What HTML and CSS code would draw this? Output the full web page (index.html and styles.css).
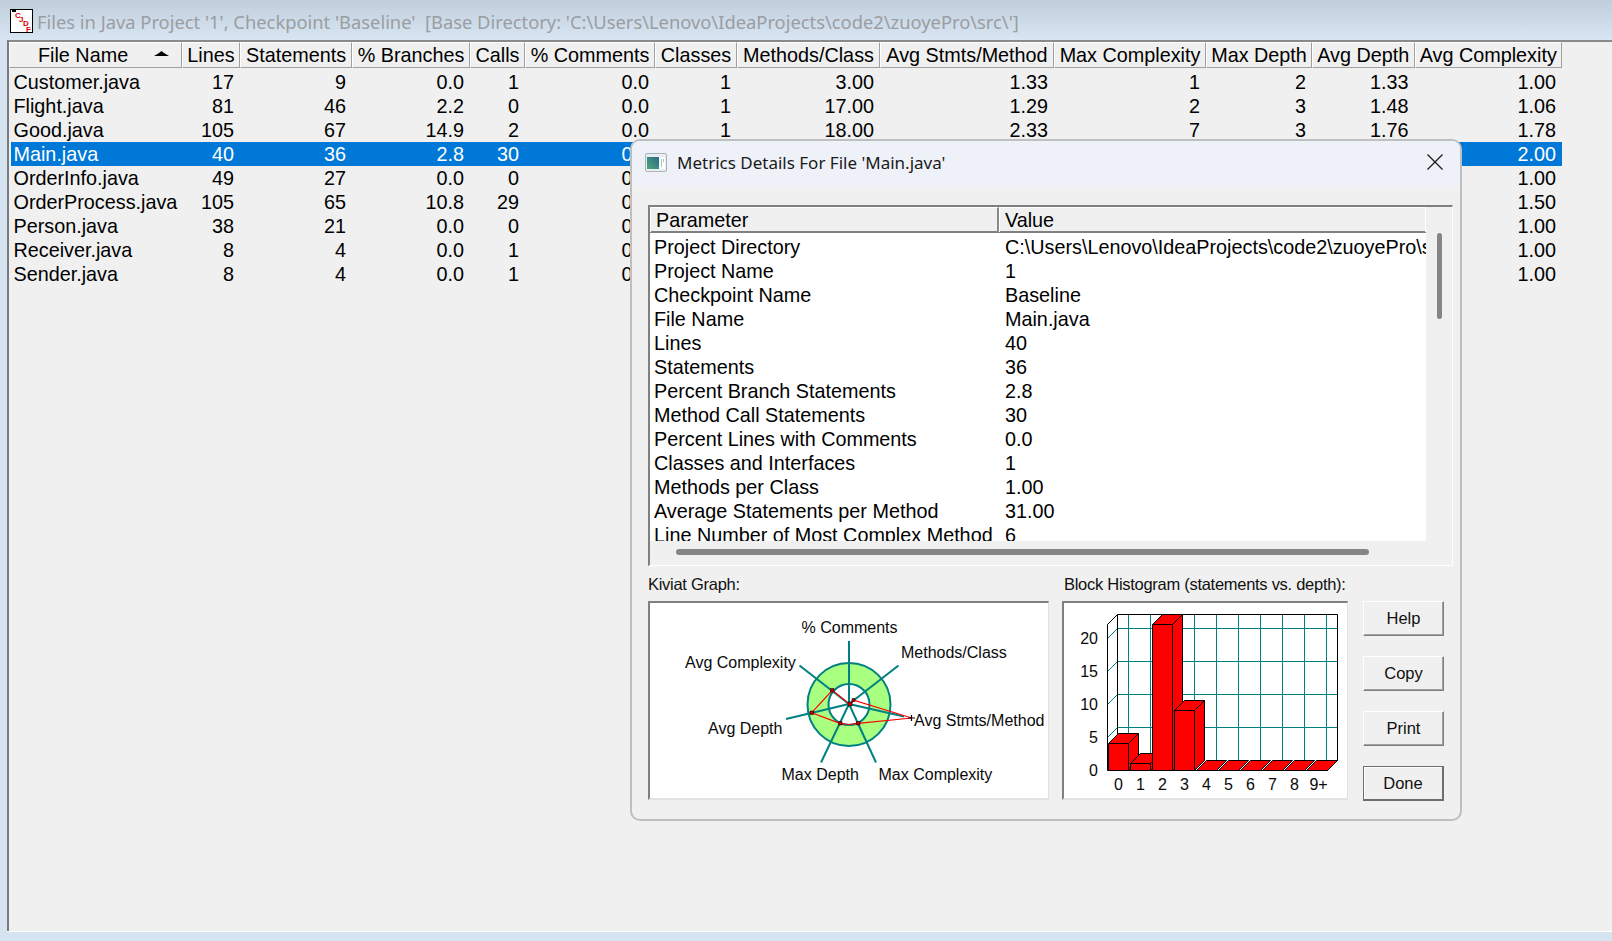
FILE: index.html
```html
<!DOCTYPE html>
<html lang="en">
<head>
<meta charset="utf-8">
<title>Files in Java Project</title>
<link rel="stylesheet" href="styles.css">
</head>
<body>
<div class="app">
  <header class="titlebar">
    <svg class="app-icon" viewBox="0 0 23 24">
      <rect x="0.5" y="0.5" width="22" height="23" fill="#fff" stroke="#000"/>
      <rect x="2" y="0" width="4" height="3" fill="#000"/>
      <text x="5" y="9" class="ico-t">C</text>
      <text x="9" y="13" class="ico-t">J</text>
      <text x="13" y="17" class="ico-t">D</text>
      <text x="16" y="23" class="ico-t">F</text>
    </svg>
    <span class="title-text">Files in Java Project '1', Checkpoint 'Baseline' &nbsp;[Base Directory: 'C:\Users\Lenovo\IdeaProjects\code2\zuoyePro\src\']</span>
  </header>

  <main class="list">
    <div class="list-head">
      <div class="hcell hcell-file"><span>File Name</span>
        <svg class="sort" viewBox="0 0 15 5"><path d="M0 5 L5 2 L7.5 0 L10 2 L15 5 Z" fill="#000"/></svg>
      </div>
      <div class="hcell">Lines</div>
      <div class="hcell">Statements</div>
      <div class="hcell">% Branches</div>
      <div class="hcell">Calls</div>
      <div class="hcell">% Comments</div>
      <div class="hcell">Classes</div>
      <div class="hcell">Methods/Class</div>
      <div class="hcell">Avg Stmts/Method</div>
      <div class="hcell">Max Complexity</div>
      <div class="hcell">Max Depth</div>
      <div class="hcell">Avg Depth</div>
      <div class="hcell">Avg Complexity</div>
    </div>
    <div class="list-body">
      <div class="row"><span class="name">Customer.java</span><span>17</span><span>9</span><span>0.0</span><span>1</span><span>0.0</span><span>1</span><span>3.00</span><span>1.33</span><span>1</span><span>2</span><span>1.33</span><span>1.00</span></div>
      <div class="row"><span class="name">Flight.java</span><span>81</span><span>46</span><span>2.2</span><span>0</span><span>0.0</span><span>1</span><span>17.00</span><span>1.29</span><span>2</span><span>3</span><span>1.48</span><span>1.06</span></div>
      <div class="row"><span class="name">Good.java</span><span>105</span><span>67</span><span>14.9</span><span>2</span><span>0.0</span><span>1</span><span>18.00</span><span>2.33</span><span>7</span><span>3</span><span>1.76</span><span>1.78</span></div>
      <div class="row row-selected"><span class="name">Main.java</span><span>40</span><span>36</span><span>2.8</span><span>30</span><span>0.0</span><span>1</span><span>1.00</span><span>31.00</span><span>2</span><span>2</span><span>1.50</span><span>2.00</span></div>
      <div class="row"><span class="name">OrderInfo.java</span><span>49</span><span>27</span><span>0.0</span><span>0</span><span>0.0</span><span>1</span><span>12.00</span><span>1.25</span><span>1</span><span>2</span><span>1.20</span><span>1.00</span></div>
      <div class="row"><span class="name">OrderProcess.java</span><span>105</span><span>65</span><span>10.8</span><span>29</span><span>0.0</span><span>1</span><span>6.00</span><span>9.50</span><span>4</span><span>4</span><span>2.10</span><span>1.50</span></div>
      <div class="row"><span class="name">Person.java</span><span>38</span><span>21</span><span>0.0</span><span>0</span><span>0.0</span><span>1</span><span>10.00</span><span>1.10</span><span>1</span><span>2</span><span>1.24</span><span>1.00</span></div>
      <div class="row"><span class="name">Receiver.java</span><span>8</span><span>4</span><span>0.0</span><span>1</span><span>0.0</span><span>1</span><span>1.00</span><span>2.00</span><span>1</span><span>2</span><span>1.00</span><span>1.00</span></div>
      <div class="row"><span class="name">Sender.java</span><span>8</span><span>4</span><span>0.0</span><span>1</span><span>0.0</span><span>1</span><span>1.00</span><span>2.00</span><span>1</span><span>2</span><span>1.00</span><span>1.00</span></div>
    </div>
  </main>
  <div class="bottom-strip"></div>

  <section class="dialog">
    <div class="dlg-title">
      <svg class="dlg-icon" viewBox="0 0 22 19">
        <defs>
          <linearGradient id="dg" x1="0" y1="1" x2="1" y2="0">
            <stop offset="0" stop-color="#4fa878"/>
            <stop offset="1" stop-color="#2c6a8a"/>
          </linearGradient>
        </defs>
        <rect x="0.5" y="0.5" width="21" height="18" rx="1.5" fill="#e8edf0" stroke="#a9b2b8"/>
        <rect x="2" y="4" width="12" height="12" fill="url(#dg)"/>
        <rect x="14" y="4" width="6" height="12" fill="#fff"/>
        <rect x="16" y="6" width="1" height="8" fill="#a5c5b5"/>
        <rect x="18" y="6" width="1" height="3" fill="#a5c5b5"/>
      </svg>
      <span class="dlg-title-text">Metrics Details For File 'Main.java'</span>
      <svg class="dlg-close" viewBox="0 0 16 16"><path d="M0.5 0.5 L15.5 15.5 M15.5 0.5 L0.5 15.5" stroke="#1a1a1a" stroke-width="1.3" fill="none"/></svg>
    </div>

    <div class="dlg-body">
      <div class="panel">
        <div class="panel-main">
          <div class="d-head">
            <div class="d-hcell">Parameter</div>
            <div class="d-hcell d-hcell-last">Value</div>
          </div>
          <div class="d-rows">
            <div class="d-row"><span>Project Directory</span><span class="d-val">C:\Users\Lenovo\IdeaProjects\code2\zuoyePro\src\</span></div>
            <div class="d-row"><span>Project Name</span><span class="d-val">1</span></div>
            <div class="d-row"><span>Checkpoint Name</span><span class="d-val">Baseline</span></div>
            <div class="d-row"><span>File Name</span><span class="d-val">Main.java</span></div>
            <div class="d-row"><span>Lines</span><span class="d-val">40</span></div>
            <div class="d-row"><span>Statements</span><span class="d-val">36</span></div>
            <div class="d-row"><span>Percent Branch Statements</span><span class="d-val">2.8</span></div>
            <div class="d-row"><span>Method Call Statements</span><span class="d-val">30</span></div>
            <div class="d-row"><span>Percent Lines with Comments</span><span class="d-val">0.0</span></div>
            <div class="d-row"><span>Classes and Interfaces</span><span class="d-val">1</span></div>
            <div class="d-row"><span>Methods per Class</span><span class="d-val">1.00</span></div>
            <div class="d-row"><span>Average Statements per Method</span><span class="d-val">31.00</span></div>
            <div class="d-row"><span>Line Number of Most Complex Method</span><span class="d-val">6</span></div>
          </div>
          <div class="h-scroll"><div class="h-thumb"></div></div>
        </div>
        <div class="v-scroll"><div class="v-thumb"></div></div>
      </div>

      <div class="lower">
        <div class="graph-col">
          <div class="g-label">Kiviat Graph:</div>
          <div class="g-box">
            <svg class="g-svg" viewBox="650 603 398 195">
              <circle cx="849" cy="704.5" r="41.5" fill="#a8ff80" stroke="#008080" stroke-width="2"/>
              <circle cx="849" cy="704.5" r="20.5" fill="#fff" stroke="#008080" stroke-width="2"/>
              <g stroke="#008080" stroke-width="2" fill="none">
                <path d="M849 704 L849 641"/>
                <path d="M849 704 L898.5 665.5"/>
                <path d="M849 704 L904 716.5"/>
                <path d="M849 704 L876 762.5"/>
                <path d="M849 704 L821 762.5"/>
                <path d="M849 704 L786 719"/>
                <path d="M849 704 L799.5 665.5"/>
              </g>
              <polygon points="850,704.5 853.7,700.3 911.7,718 858.3,723.3 849,724.5 840,723.3 811.7,712.7 832.3,690.3" fill="none" stroke="#f00" stroke-width="1.2"/>
              <path d="M848 702 h4 v4 h-4 z M852 698.5 h3 v3 h-3 z M810 711 h3.5 v3.5 h-3.5 z M830.5 688.5 h3.5 v3.5 h-3.5 z M838.5 721.5 h3.5 v3.5 h-3.5 z M856.5 721.5 h3.5 v3.5 h-3.5 z" fill="#c00000" stroke="#000" stroke-width="0.5"/>
              <path d="M908 718 h7 M911.5 715 v6" stroke="#000" stroke-width="1.2"/>
              <text class="g-t" x="801.5" y="632.5">% Comments</text>
              <text class="g-t" x="901" y="657.5">Methods/Class</text>
              <text class="g-t" x="685" y="667.5">Avg Complexity</text>
              <text class="g-t" x="914" y="725.5">Avg Stmts/Method</text>
              <text class="g-t" x="708" y="734">Avg Depth</text>
              <text class="g-t" x="781.5" y="780">Max Depth</text>
              <text class="g-t" x="878.5" y="780">Max Complexity</text>
            </svg>
          </div>
        </div>

        <div class="graph-col">
          <div class="g-label g-label-h">Block Histogram (statements vs. depth):</div>
          <div class="g-box">
            <svg class="g-svg" viewBox="1064 603 283 195">
              <g stroke="#008080" stroke-width="1" fill="none">
                <path d="M1128.5 614.5 V760.5 M1150.5 614.5 V760.5 M1172.5 614.5 V760.5 M1194.5 614.5 V760.5 M1216.5 614.5 V760.5 M1238.5 614.5 V760.5 M1260.5 614.5 V760.5 M1282.5 614.5 V760.5 M1304.5 614.5 V760.5 M1326.5 614.5 V760.5"/>
                <path d="M1117.5 628.5 H1337.5 M1117.5 661.5 H1337.5 M1117.5 694.5 H1337.5 M1117.5 727.5 H1337.5"/>
                <path d="M1107.5 638.5 L1117.5 628.5 M1107.5 671.5 L1117.5 661.5 M1107.5 704.5 L1117.5 694.5 M1107.5 737.5 L1117.5 727.5"/>
              </g>
              <path d="M1107.5 624.5 L1117.5 614.5 H1337.5 V760.5 L1327.5 770.5 H1107.5 Z M1117.5 614.5 V760.5" fill="none" stroke="#000" stroke-width="1"/>
              <g stroke="#000" stroke-width="1" fill="#f00">
                <path d="M1118.5 733.5 H1138.5 V760.5 L1128.5 770.5 H1108.5 V743.5 Z"/>
                <path d="M1108.5 743.5 H1128.5 L1138.5 733.5 M1128.5 743.5 V770.5" fill="none"/>
                <path d="M1140.5 753.5 H1160.5 V760.5 L1150.5 770.5 H1130.5 V763.5 Z"/>
                <path d="M1130.5 763.5 H1150.5 L1160.5 753.5 M1150.5 763.5 V770.5" fill="none"/>
                <path d="M1162.5 614.5 H1182.5 V760.5 L1172.5 770.5 H1152.5 V624.5 Z"/>
                <path d="M1152.5 624.5 H1172.5 L1182.5 614.5 M1172.5 624.5 V770.5" fill="none"/>
                <path d="M1184.5 700.5 H1204.5 V760.5 L1194.5 770.5 H1174.5 V710.5 Z"/>
                <path d="M1174.5 710.5 H1194.5 L1204.5 700.5 M1194.5 710.5 V770.5" fill="none"/>
                <path d="M1196.5 770.5 L1206.5 760.5 H1226.5 L1216.5 770.5 Z"/>
                <path d="M1218.5 770.5 L1228.5 760.5 H1248.5 L1238.5 770.5 Z"/>
                <path d="M1240.5 770.5 L1250.5 760.5 H1270.5 L1260.5 770.5 Z"/>
                <path d="M1262.5 770.5 L1272.5 760.5 H1292.5 L1282.5 770.5 Z"/>
                <path d="M1284.5 770.5 L1294.5 760.5 H1314.5 L1304.5 770.5 Z"/>
                <path d="M1306.5 770.5 L1316.5 760.5 H1337.5 L1327.5 770.5 Z"/>
              </g>
              <text class="g-t g-end" x="1098" y="644">20</text>
              <text class="g-t g-end" x="1098" y="677">15</text>
              <text class="g-t g-end" x="1098" y="710">10</text>
              <text class="g-t g-end" x="1098" y="743">5</text>
              <text class="g-t g-end" x="1098" y="776">0</text>
              <text class="g-t g-mid" x="1118.5" y="790">0</text>
              <text class="g-t g-mid" x="1140.5" y="790">1</text>
              <text class="g-t g-mid" x="1162.5" y="790">2</text>
              <text class="g-t g-mid" x="1184.5" y="790">3</text>
              <text class="g-t g-mid" x="1206.5" y="790">4</text>
              <text class="g-t g-mid" x="1228.5" y="790">5</text>
              <text class="g-t g-mid" x="1250.5" y="790">6</text>
              <text class="g-t g-mid" x="1272.5" y="790">7</text>
              <text class="g-t g-mid" x="1294.5" y="790">8</text>
              <text class="g-t g-mid" x="1318.5" y="790">9+</text>
            </svg>
          </div>
        </div>

        <div class="buttons">
          <button class="btn">Help</button>
          <button class="btn">Copy</button>
          <button class="btn">Print</button>
          <button class="btn btn-default">Done</button>
        </div>
      </div>
    </div>
  </section>
</div>
</body>
</html>
```

FILE: styles.css
```css
* { box-sizing: border-box; }
html, body { margin: 0; padding: 0; }
body {
  width: 1612px;
  height: 941px;
  overflow: hidden;
  background: #d6e4f2;
  font-family: "Liberation Sans", Arial, sans-serif;
  color: #000;
}
.app {
  position: relative;
  width: 1612px;
  height: 941px;
  display: flex;
  flex-direction: column;
}
.titlebar {
  height: 40px;
  flex: none;
  display: flex;
  align-items: center;
  gap: 4px;
  padding: 2px 0 0 10px;
  background: linear-gradient(#c0cedc, #d8e5f3);
}
.app-icon { width: 23px; height: 24px; flex: none; }
.ico-t { font: bold 8px "Liberation Sans", sans-serif; fill: #e00000; }
.title-text {
  font: 18.33px "Noto Sans", sans-serif;
  color: #9a9da1;
  white-space: pre;
}
.list {
  flex: 1;
  margin-left: 7px;
  background: #f0f0f0;
  border-top: 2px solid #8a8a8a;
  border-left: 2px solid #7a7a7a;
  font-size: 19.8px;
  overflow: hidden;
}
.list-head, .row {
  display: grid;
  grid-template-columns: var(--first) 58px 112px 118px 55px 130px 82px 143px 174px 152px 106px 102.5px 147.5px;
  width: max-content;
}
.list-head { --first: 173px; height: 26px; }
.hcell {
  display: flex;
  align-items: center;
  justify-content: center;
  white-space: nowrap;
  background: #f0f0f0;
  border-top: 1px solid #fff;
  border-left: 1px solid #fff;
  border-right: 1px solid #a0a0a0;
  border-bottom: 1px solid #a0a0a0;
}
.hcell-file { justify-content: flex-start; padding-left: 28px; }
.sort { width: 15px; height: 5px; margin-left: 26px; margin-top: -3px; }
.list-body { padding: 2px 0 0 2px; }
.row { --first: 171px; height: 24px; line-height: 24px; }
.row span { text-align: right; padding-right: 6px; white-space: nowrap; }
.row .name { text-align: left; padding: 0 0 0 2.5px; }
.row-selected { background: #0078d7; color: #fff; }
.bottom-strip { height: 10px; flex: none; border-top: 1px solid #fff; margin-left: 7px; }

.dialog {
  position: absolute;
  left: 630px;
  top: 139px;
  width: 832px;
  height: 682px;
  background: #f0f0f0;
  border: 2px solid #bdbfc1;
  border-radius: 10px;
  display: flex;
  flex-direction: column;
  overflow: hidden;
}
.dlg-title {
  height: 45px;
  flex: none;
  background: #eef2f8;
  display: flex;
  align-items: center;
  padding: 0 17px 3px 13px;
}
.dlg-icon { width: 22px; height: 19px; flex: none; }
.dlg-title-text { font: 17px "Noto Sans", sans-serif; color: #1a1a1a; margin-left: 10px; flex: 1; }
.dlg-close { width: 16px; height: 16px; flex: none; }
.dlg-body { flex: 1; padding: 19px 7px 0 16px; min-height: 0; }

.panel {
  height: 361px;
  display: flex;
  border-top: 2px solid #808080;
  border-left: 2px solid #808080;
  border-right: 1px solid #fff;
  border-bottom: 1px solid #fff;
}
.panel-main { width: 776px; flex: none; display: flex; flex-direction: column; font-size: 19.8px; }
.d-head { display: grid; grid-template-columns: 349px 427px; height: 26px; border-bottom: 2px solid #808080; flex: none; }
.d-hcell {
  line-height: 24px;
  padding-left: 5px;
  border-right: 2px solid #8a8a8a;
  border-top: 1px solid #fff;
  border-left: 1px solid #fff;
}
.d-hcell-last { border-right: 1px solid #fff; }
.d-rows { height: 308px; flex: none; background: #fff; overflow: hidden; padding: 2px 0 0 4px; }
.d-row { display: grid; grid-template-columns: 345px 1fr; height: 24px; line-height: 24px; }
.d-row span { white-space: nowrap; overflow: hidden; }
.d-val { padding-left: 6px; }
.h-scroll { flex: 1; padding: 8px 0 0 26px; }
.h-thumb { width: 693px; height: 6px; border-radius: 3px; background: #858585; }
.v-scroll { flex: 1; padding: 26px 0 0 11px; }
.v-thumb { width: 5px; height: 86px; border-radius: 3px; background: #858585; }

.lower { display: grid; grid-template-columns: 401px 286px 81px; column-gap: 13px; height: 235px; }
.graph-col { display: flex; flex-direction: column; }
.g-label { height: 35px; line-height: 37px; font-size: 16.5px; color: #111; letter-spacing: -0.28px; }
.g-label-h { margin-left: 2px; }
.g-box {
  height: 199px;
  background: #fff;
  border-top: 2px solid #808080;
  border-left: 2px solid #808080;
  border-right: 1px solid #e2e2e2;
  border-bottom: 2px solid #e2e2e2;
  overflow: hidden;
}
.g-svg { display: block; width: 100%; height: 100%; }
.g-t { font: 16px "Liberation Sans", sans-serif; fill: #0a0a0a; }
.g-end { text-anchor: end; }
.g-mid { text-anchor: middle; }

.buttons { display: flex; flex-direction: column; justify-content: space-between; padding-top: 35px; height: 235px; margin-left: 2px; }
.btn {
  width: 81px;
  height: 35px;
  padding: 0;
  background: #f0f0f0;
  font: 16.5px "Liberation Sans", sans-serif;
  color: #111;
  border: 1px solid;
  border-color: #fff #808080 #808080 #fff;
  box-shadow: inset 0 -1px 0 #a0a0a0, inset -1px 0 0 #a0a0a0;
  border-radius: 0;
}
.btn-default {
  border-color: #6e6e6e;
  border-right-width: 2px;
  border-bottom-width: 2px;
  box-shadow: inset 1px 1px 0 #fff;
}
```
